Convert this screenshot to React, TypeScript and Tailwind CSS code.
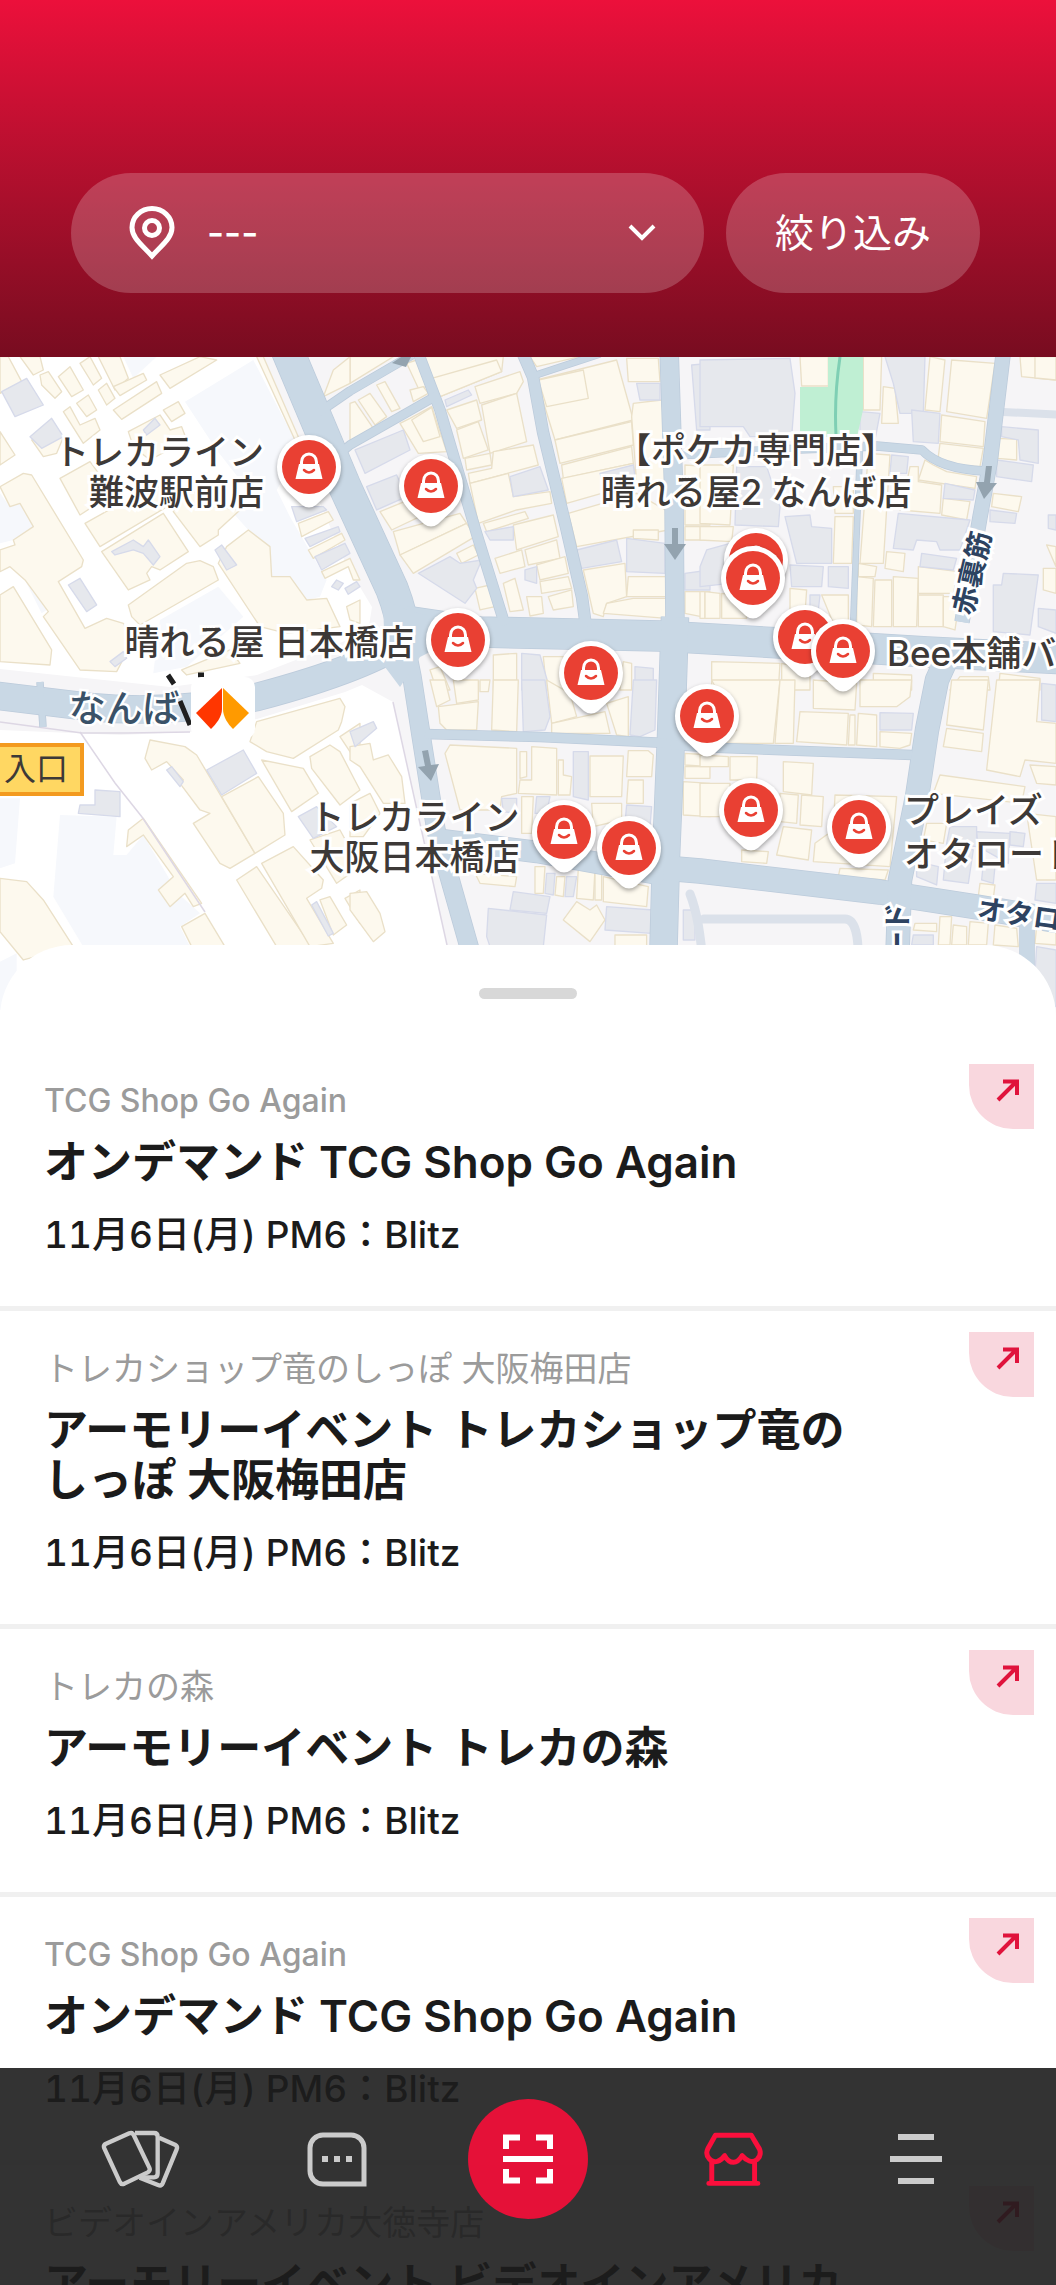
import React from "react";

const MAP_WIDTH = 1056;

type Tile = {
  x: number;
  y: number;
  pale?: string[];
  cream?: string[];
  gray?: string[];
};

/* Building footprints, grouped by map tile. Tile units are a third of a map unit. */
const stationTiles: Tile[] = [
  {
    x: 0,
    y: -7,
    pale: [
      "555,155 760,30 900,300 830,420 870,500 980,690 960,740 920,750 870,680 815,680 810,590 745,540 700,490 760,440 650,300",
      "480,810 655,710 730,800 560,950 460,970",
      "0,430 30,470 60,460 100,530 40,570 0,580",
      "75,690 110,710 140,780 125,790",
      "370,20 470,20 400,85",
    ],
    cream: [
      "0,20 25,20 65,95 0,130",
      "60,20 120,20 130,60 100,75",
      "120,75 145,65 185,125 165,145 125,105",
      "175,80 210,50 250,120 215,140",
      "240,40 270,20 305,85 280,105",
      "295,20 360,20 385,85 345,120",
      "340,110 430,70 440,90 360,137",
      "295,120 320,100 345,145 320,165",
      "230,160 265,135 290,180 260,200",
      "190,185 210,170 240,225 285,205 300,240 250,280",
      "340,180 470,95 485,130 365,208",
      "480,75 600,20 650,30 510,115",
      "490,180 535,155 555,190 515,215",
      "385,245 480,195 510,240 545,230 560,270 450,330 400,290",
      "0,245 45,315 0,345",
      "95,270 190,262 170,310 130,320",
      "180,385 270,335 340,430 240,495",
      "0,410 70,370 95,375 250,630 245,650 175,695 255,835 320,805 370,820 400,870 350,965 240,960 130,800 145,785 75,690 30,650 0,665 0,600 45,585 40,570 100,530 60,460 30,470",
      "255,520 470,400 510,465 300,590",
      "305,605 490,490 565,605 480,660 455,650 440,670 450,690 385,720",
      "520,485 560,410 640,470 720,480 655,540 655,555 600,590",
      "385,765 560,640 600,632 640,650 655,690 420,825 395,800",
      "680,590 745,540 810,590 815,680 870,680 920,750 980,745 1020,830 860,850 780,830 655,640",
      "0,735 40,710 155,900 150,945 0,935",
      "545,960 690,900 720,940 560,975",
      "770,20 790,20 895,260 885,270",
      "895,520 985,485 1000,510 905,560",
      "925,600 1025,550 1035,570 940,625",
      "965,665 1050,625 1080,690 1060,690 1045,650 975,685",
      "1040,770 1080,750 1080,820 1050,810",
    ],
    gray: [
      "5,125 80,85 130,165 45,200",
      "90,260 155,205 190,260 125,295",
      "430,240 465,205 480,225 440,255",
      "645,600 665,585 710,645 680,660",
      "205,705 240,685 290,765 260,785",
      "335,605 400,570 430,590 445,570 480,620 460,645 430,610 400,600 345,615",
      "330,935 370,905 380,925 345,950",
      "875,470 970,470 980,480 890,515",
      "915,565 1015,530 1020,545 930,590",
      "945,620 1035,580 1050,610 965,660",
      "995,710 1010,690 1030,700 1015,720",
      "1035,715 1070,695 1080,710 1045,733",
    ],
  },
  {
    x: 0,
    y: 323,
    pale: [
      "180,405 350,410 340,525 380,525 430,465 510,600 475,630 510,680 545,650 600,700 540,740 570,800 250,800 160,650",
      "0,355 60,355 45,550 0,565",
      "0,845 50,820 50,990 0,990",
    ],
    cream: [
      "450,180 555,200 590,225 765,520 690,565 660,550 580,430 630,400 600,390 540,310 550,300 500,245 455,270 435,235",
      "665,350 775,290 850,400 855,465 765,520",
      "770,125 1020,55 1035,80 1025,125 1015,150 880,235 800,215 750,185",
      "785,240 910,265 955,340 875,395",
      "930,230 990,195 1020,215 1080,330 1020,375 935,265",
      "1020,170 1080,130 1080,260",
      "430,415 605,670 580,680 555,640 510,680 475,630 520,590 430,465 380,500 385,450",
      "545,740 615,700 675,800 575,800",
      "0,595 80,605 130,660 220,800 70,840 0,755",
      "710,600 770,560 935,800 830,800",
      "785,550 880,500 970,600 965,625 920,655 1000,790 930,800",
      "930,480 1020,450 1080,560 1010,610",
      "960,660 990,650 1040,735 1000,765",
      "1035,655 1080,630 1080,730",
    ],
    gray: [
      "620,270 730,210 770,280 665,345",
      "285,330 360,335 360,410 235,400 240,375 285,375",
      "500,270 515,260 550,305 540,320",
      "895,410 950,380 1010,440 940,475",
      "935,675 950,665 1000,760 985,768",
    ],
  },
  {
    x: 350,
    y: 323,
    cream: [
      "0,200 60,190 70,240 115,225 155,290 165,370 100,370 30,260 0,240",
      "0,370 60,340 90,400 40,470 0,470",
      "0,640 50,635 90,700 105,755 70,785 0,690",
    ],
    gray: ["0,155 70,125 80,145 15,200"],
  },
];

const cityTiles: Tile[] = [
  {
    x: 350,
    y: -7,
    cream: [
      "0,20 130,20 0,100",
      "-50,60 0,20 0,100 -80,140",
      "0,160 15,155 70,235 0,275",
      "25,150 60,130 110,200 75,225",
      "80,105 105,95 150,175 125,185",
      "170,40 200,30 230,110 205,115",
      "180,120 220,110 235,130 190,155",
      "150,220 180,205 245,170 265,230 290,305 205,310",
      "185,210 245,172 270,260 220,275",
      "220,20 460,20 455,65 270,140",
      "245,85 440,30 455,65 270,140",
      "375,110 510,65 520,95 500,130 390,160",
      "290,180 380,150 395,210 320,235",
      "320,240 385,215 415,300 340,325",
      "395,165 500,130 530,275 420,310",
      "345,325 420,310 425,345 350,360",
      "430,305 550,285 565,345 360,400 355,370 425,355",
      "360,400 475,370 490,440 600,425 605,460 500,480 385,520",
      "400,520 525,485 535,505 410,545",
      "490,525 610,495 625,560 500,600",
      "435,625 515,600 525,650 450,670",
      "525,600 620,570 630,625 535,645",
      "560,645 645,620 655,670 570,690",
      "570,695 655,680 665,715 575,730",
      "595,740 665,720 670,770 610,780",
      "530,740 575,740 580,790 540,798",
      "460,700 495,685 520,780 480,785",
      "375,715 420,705 435,770 390,780",
      "90,485 200,440 230,490 125,540",
      "130,545 330,490 350,520 150,615",
      "150,615 350,520 375,560 190,670",
      "320,610 370,585 385,615 335,640",
      "560,90 800,30 850,210 615,270",
      "565,90 700,60 715,145 590,170",
      "615,270 845,215 850,285 630,340",
      "635,345 845,290 850,340 640,385",
      "635,385 850,340 860,400 650,460",
      "655,490 860,430 955,485 955,540 680,590",
      "830,25 925,25 930,95 835,95",
      "850,160 935,150 945,260 950,400 860,400 845,200",
      "850,540 925,540 925,570 850,565",
      "700,660 825,640 830,740 770,760 760,800 730,790",
      "835,680 950,680 955,740 830,740",
      "770,760 850,745 955,745 950,805 760,790",
      "540,20 690,20 560,50",
      "1005,345 1080,350 1080,525 1005,525",
      "1005,530 1080,530 1080,570 1005,570",
      "1005,725 1080,725 1080,805 1005,790",
      "240,960 270,950 300,1020 260,1020",
      "430,915 500,910 500,1020 430,1020",
      "580,920 640,920 650,1020 590,1020",
      "820,935 845,940 845,1020 810,1020",
    ],
    gray: [
      "15,300 160,240 180,300 45,370",
      "50,410 140,375 170,440 80,480",
      "205,670 300,620 330,640 395,630 370,690 380,715 345,760",
      "285,150 355,120 365,135 290,170",
      "480,380 570,350 595,420 490,440",
      "405,545 490,530 490,570 420,570",
      "860,100 930,100 930,150 870,150",
      "680,600 800,570 815,635 695,655",
      "830,565 945,580 945,670 830,665",
      "525,660 560,650 560,700 525,690",
      "515,910 570,915 600,1020 515,1020",
      "855,950 910,955 910,1020 855,1020",
      "1025,45 1080,40 1080,240 1040,240",
      "1005,670 1080,660 1080,720 1005,720",
      "750,370 850,345 855,380 760,400",
    ],
  },
  {
    x: 700,
    y: -7,
    cream: [
      "300,20 385,20 385,108 305,108",
      "490,20 545,20 540,180 490,180",
      "550,110 585,115 595,220 545,220",
      "690,20 735,30 720,185 675,180",
      "755,30 885,40 860,205 740,185",
      "725,195 855,215 850,290 720,275",
      "720,280 850,295 840,350 740,345 715,320",
      "895,265 950,268 950,330 893,325",
      "960,20 1068,20 1068,90 965,80",
      "1005,20 1068,20 1068,90 1005,84",
      "675,330 700,345 740,365 830,380 825,415 655,390",
      "630,350 655,350 655,395 725,405 720,490 600,480 620,400",
      "730,445 810,455 800,510 725,495",
      "880,430 965,440 955,485 875,470",
      "505,310 570,315 550,640 480,640",
      "400,410 460,410 460,490 405,490",
      "405,500 460,500 455,640 400,640",
      "0,345 100,345 90,525 0,520",
      "0,530 100,530 95,575 0,570",
      "560,605 615,610 610,665 555,655",
      "475,640 530,650 525,680 475,680",
      "470,680 520,685 515,830 470,825",
      "525,690 575,690 575,830 520,830",
      "580,680 655,685 650,830 580,830",
      "655,650 775,665 760,730 655,730",
      "655,735 730,735 730,830 655,830",
      "730,740 780,740 765,840 730,830",
      "270,715 320,720 315,790 270,780",
      "365,735 445,735 445,825 400,820",
      "0,725 15,725 15,805 0,805",
      "15,725 60,730 60,805 15,805",
      "65,730 130,740 140,805 65,805",
      "1040,585 1068,590 1068,650",
      "1030,655 1068,655 1068,730 1030,720",
      "35,935 240,940 235,1020 35,1020",
      "245,940 330,960 330,1020 245,1020",
      "520,970 635,975 635,1020 520,1020",
      "780,980 865,980 870,1020 750,1020",
      "900,970 1020,985 1020,1020 895,1020",
    ],
    gray: [
      "0,30 270,25 285,130 275,260 150,260 130,230 0,230",
      "480,185 540,190 525,270 480,250",
      "555,20 675,20 670,190 600,190 580,100",
      "635,180 720,190 715,280 640,275",
      "575,315 625,320 620,370 570,370",
      "735,400 825,420 820,450 730,445",
      "595,490 810,510 780,600 720,600 710,575 650,570 640,600 580,595",
      "665,610 770,625 760,660 660,650",
      "255,500 330,495 335,530 395,535 395,640 290,640",
      "270,645 370,650 365,710 275,710",
      "385,650 445,650 445,715 385,710",
      "110,350 200,350 240,470 235,530 105,525",
      "905,230 1015,240 1015,340 960,330 955,270 905,260",
      "890,330 1000,345 995,395 890,380",
      "870,480 950,490 945,520 870,515",
      "910,670 1015,675 990,855 880,845 880,705 905,705",
      "1015,775 1068,780 1068,850 1015,830",
      "1045,495 1068,495 1068,540 1045,535",
      "20,600 90,580 90,700 0,710 0,650",
      "330,735 360,735 355,780 330,780",
    ],
  },
  {
    x: 350,
    y: 323,
    cream: [
      "240,0 285,0 300,60 260,80",
      "310,0 385,0 385,60 320,70",
      "265,80 385,65 380,150 290,150 270,130",
      "390,0 420,0 415,35 390,35",
      "430,0 505,0 500,155 425,150",
      "590,0 660,40 680,110 605,130",
      "605,130 765,95 780,160 605,160",
      "770,70 835,50 835,170 800,165",
      "300,195 500,205 500,340 455,350 450,390 330,390 285,220",
      "545,200 620,205 620,345 505,340 510,300 545,300",
      "510,215 530,215 530,290 510,295",
      "625,240 640,240 640,285 665,290 660,345 625,345",
      "720,228 820,228 815,350 720,350",
      "835,212 895,212 910,225 905,290 830,290",
      "835,300 880,300 880,370 830,370",
      "725,370 815,370 815,420 730,440",
      "515,350 550,350 545,460 515,460",
      "375,580 500,590 495,620 390,610",
      "555,560 585,560 580,640 555,640",
      "620,590 645,590 640,650 615,645",
      "685,565 735,570 730,660 680,655",
      "735,575 755,575 755,660 735,660",
      "760,590 895,620 890,680 760,665",
      "680,665 720,690 740,675 765,720 720,785 640,720",
      "795,765 890,765 890,800 795,800",
      "1005,220 1080,225 1080,260 1005,255",
      "1005,260 1080,260 1080,295 1005,295",
      "1000,305 1080,310 1080,410 1000,405",
    ],
    gray: [
      "515,0 585,0 600,110 585,150 520,155",
      "850,0 920,0 915,150 870,170 840,165",
      "670,215 715,215 715,360 670,350",
      "455,355 500,355 500,400 460,395",
      "830,375 905,380 900,440 825,430",
      "490,635 600,650 590,700 480,690",
      "415,685 590,705 580,800 420,800 410,770",
      "770,680 910,690 905,760 765,750",
      "590,580 615,580 610,645 585,640",
      "650,590 680,590 670,650 645,650",
      "1000,690 1035,690 1035,780 1000,780",
      "560,350 600,350 590,400 555,400",
    ],
  },
  {
    x: 700,
    y: 323,
    cream: [
      "35,0 240,0 220,190 50,190 110,150",
      "240,0 285,0 280,190 225,190",
      "300,95 445,100 440,195 290,185",
      "450,105 465,105 465,195 445,195",
      "475,100 530,105 530,200 470,195",
      "540,155 635,160 630,195 600,205 540,200",
      "340,0 470,10 465,90 340,85",
      "480,0 635,0 630,50 590,80 480,80",
      "755,0 865,0 850,150 740,135",
      "740,145 850,160 845,215 730,200",
      "890,0 1020,0 1010,125 1068,130 1068,250 975,240 960,290 860,270",
      "990,255 1068,260 1068,315 1010,310",
      "720,285 975,320 965,370 700,340",
      "680,430 740,430 730,490 670,480",
      "250,245 340,250 335,345 250,335",
      "90,230 172,230 170,300 90,300",
      "0,225 85,230 85,260 0,260",
      "0,310 90,310 90,410 0,410",
      "240,340 295,345 290,430 240,425",
      "305,345 370,350 365,440 300,435",
      "250,440 335,450 325,540 230,525",
      "405,345 590,350 570,560 340,545 345,490 400,450",
      "420,565 565,570 555,600 415,590",
      "125,510 205,515 200,550 125,545",
      "980,400 1068,410 1068,600 1010,600",
      "840,610 885,615 880,655 835,650",
      "720,710 755,710 750,795 715,795",
      "645,730 710,730 710,755 640,750",
      "760,735 800,740 800,795 755,795",
      "810,725 865,730 860,795 805,795",
      "885,735 950,745 955,800 880,795",
      "1010,740 1068,740 1068,795 1005,790",
    ],
    gray: [
      "540,98 640,100 635,150 540,150",
      "750,440 830,440 830,500 740,490",
      "740,490 820,510 805,610 730,600",
      "650,545 715,560 710,615 650,590",
      "850,550 885,560 880,610 845,600",
      "930,455 975,460 970,500 930,495",
      "1010,610 1068,610 1068,670 1005,660",
      "640,765 700,765 700,795 635,795",
      "1010,800 1068,810 1068,980 1000,960",
      "1025,10 1068,15 1068,125 1025,120",
      "830,455 930,460 925,550 835,500",
    ],
  },
];

function Buildings({ tiles }: { tiles: Tile[] }) {
  return (
    <>
      {tiles.map((t, i) => (
        <g key={i} transform={`translate(${t.x} ${t.y}) scale(0.3333)`} strokeWidth={4} strokeLinejoin="round">
          {t.pale?.map((p) => (
            <polygon key={p} points={p} fill="#f6f8fc" />
          ))}
          {t.cream?.map((p) => (
            <polygon key={p} points={p} fill="#fdf9ee" stroke="#eae0c8" />
          ))}
          {t.gray?.map((p) => (
            <polygon key={p} points={p} fill="#e6e8ed" stroke="#d6daea" />
          ))}
        </g>
      ))}
    </>
  );
}

const roads: { d: string; w: number }[] = [
  { d: "M286 -10 L345 130 L392 232 Q402 258 404 280", w: 32 },
  { d: "M392 262 L480 275 L660 279 L780 286 L927 295 L1066 302", w: 30 },
  { d: "M410 280 Q370 310 257 340 Q170 358 90 350 L-10 338", w: 27 },
  { d: "M402 270 L412 320 L421 378 L436 473 L472 600", w: 18 },
  { d: "M416 -10 L440 53 L477 178 L505 268", w: 10 },
  { d: "M520 -10 L533 20 L543 75 L566 170 L582 240 L586 270", w: 11 },
  { d: "M533 19 L600 -3", w: 6 },
  { d: "M318 56 L350 34 L412 -2", w: 8 },
  { d: "M338 98 L350 88 L436 39", w: 8 },
  { d: "M669 -10 L674 143 L675 270", w: 18 },
  { d: "M675 260 L671 380 L666 500 L663 610", w: 27 },
  { d: "M425 377 L540 380 L666 386", w: 9 },
  { d: "M671 388 L723 391 L912 398", w: 9 },
  { d: "M433 482 L537 495 L664 518", w: 21 },
  { d: "M664 511 L700 514 L880 535 L977 550 L1066 565", w: 24 },
  { d: "M1004 -10 L990 106 L980 160 L962 265", w: 14 },
  { d: "M952 290 L937 323 L927 373 L917 440 L900 523 L897 610", w: 23 },
  { d: "M675 98 L800 92 L877 89 L922 93 Q940 112 985 114", w: 8 },
  { d: "M860 92 L853 270", w: 5 },
  { d: "M40 325 L43 370", w: 6 },
  { d: "M1027 560 L1027 610", w: 14 },
];

function MapDrawing() {
  return (
    <svg
      aria-hidden="true"
      className="absolute inset-0 h-full w-full"
      viewBox="0 0 1056 660"
      preserveAspectRatio="xMidYMid slice"
    >
      <rect width="1056" height="660" fill="#f6f5f7" />
      <polygon points="0,0 258,0 345,205 372,250 368,275 257,318 170,330 0,312" fill="#ffffff" />
      <polygon points="0,373 120,378 190,375 257,362 345,335 362,328 393,345 447,588 447,660 0,660" fill="#ffffff" />
      <Buildings tiles={stationTiles} />
      <path d="M80 375 L115 426 L142 460 L205 555" fill="none" stroke="#ddd7e4" strokeWidth="1.5" />
      <path d="M0 365 L82 376 L128 376 L190 375" fill="none" stroke="#ddd7e4" strokeWidth="1.5" />
      <path d="M393 345 L447 588" fill="none" stroke="#ddd7e4" strokeWidth="1.5" />
      <Buildings tiles={cityTiles} />
      <polygon points="828,0 863,0 863,53 857,80 800,80 800,30 828,30" fill="#bfefd3" />
      <path d="M840 0 Q834 40 836 78" fill="none" stroke="#7fcfb4" strokeWidth="3" />
      <g fill="none" stroke="#dbe1ea" strokeLinecap="round">
        <path d="M1003 55 L1066 58" strokeWidth="8" />
        <path d="M690 537 Q700 562 703 610 M704 562 L845 562 Q860 562 858 610" strokeWidth="9" />
      </g>
      <g fill="none" stroke="#bccbdb" strokeLinejoin="round">
        {roads.map((r) => (
          <path key={r.d} d={r.d} strokeWidth={r.w + 1.5} />
        ))}
      </g>
      <g fill="none" stroke="#c9d8e5" strokeLinejoin="round">
        {roads.map((r) => (
          <path key={r.d} d={r.d} strokeWidth={r.w} />
        ))}
      </g>
      <path d="M383 240 Q400 255 440 260 L440 290 L420 300 L400 330 L385 310 Z" fill="#c9d8e5" />
      <g fill="#93a3af">
        <path d="M672 171h6v16h8l-11 16l-11 -16h8z" />
        <path d="M986 109h6l-2 17h7l-13 16l-8 -17h8z" />
        <path d="M422 394l6 -1l3 15l8 -1l-8 17l-13 -14l7 -1z" />
        <path d="M392 6l12 -8h8l-6 12z" />
      </g>
      <path d="M168 318l6 9M180 344l10 24M198 318h6" stroke="#1f1f1f" strokeWidth="5" fill="none" />
    </svg>
  );
}

const pins: { x: number; y: number; shop: string }[] = [
  { x: 309, y: 110, shop: "トレカライン 難波駅前店" },
  { x: 431, y: 129, shop: "ショップ 1" },
  { x: 458, y: 283, shop: "晴れる屋 日本橋店" },
  { x: 591, y: 316, shop: "ショップ 2" },
  { x: 756, y: 203, shop: "ショップ 3" },
  { x: 753, y: 221, shop: "晴れる屋2 なんば店" },
  { x: 805, y: 280, shop: "ショップ 4" },
  { x: 843, y: 294, shop: "Bee本舗" },
  { x: 707, y: 359, shop: "ショップ 5" },
  { x: 751, y: 453, shop: "ショップ 6" },
  { x: 859, y: 470, shop: "プレイズ オタロード" },
  { x: 564, y: 475, shop: "トレカライン 大阪日本橋店" },
  { x: 629, y: 491, shop: "ショップ 7" },
];

function ShopPin({ x, y, shop }: { x: number; y: number; shop: string }) {
  return (
    <button
      type="button"
      aria-label={shop}
      className="absolute h-[80px] w-[72px] -translate-x-1/2"
      style={{ left: `${(x / MAP_WIDTH) * 100}%`, top: y - 36 }}
    >
      <svg viewBox="-36 -36 72 80" className="h-full w-full drop-shadow-[0_2px_2px_rgba(0,0,0,0.35)]" aria-hidden="true">
        <path d="M0 -32A32 32 0 0 1 32 0C32 10 28 17 22 24L7 38Q0 43 -7 38L-22 24C-28 17 -32 10 -32 0A32 32 0 0 1 0 -32Z" fill="#fff" />
        <circle r="27" fill="#e94033" />
        <path d="M-10 -3H10L13.500 12H-13.500Z" fill="#fff" />
        <path d="M-7.500 -2V-5A7.500 8 0 0 1 7.500 -5V-2" fill="none" stroke="#fff" strokeWidth="3" />
        <path d="M-5 3Q0 8 5 3" fill="none" stroke="#e94033" strokeWidth="2.500" strokeLinecap="round" />
      </svg>
    </button>
  );
}

const halo = "[-webkit-text-stroke:6px_#ffffff] [paint-order:stroke_fill]";
const shopLabel = `absolute whitespace-pre text-[35px] font-medium text-[#3d3937] ${halo}`;
const streetLabel = `absolute whitespace-nowrap text-[28px] leading-[32px] font-bold text-[#2d4361] ${halo}`;

function ShopMap() {
  return (
    <section aria-label="地図" className="relative h-[660px] shrink-0 overflow-hidden">
      <MapDrawing />

      <span className={`${streetLabel} top-[200px] left-[92%] -translate-x-1/2 -rotate-[77deg]`}>赤裏筋</span>
      <span className={`${streetLabel} top-[545px] left-[92.5%] rotate-[8deg]`}>オタロード</span>
      <span className={`${streetLabel} top-[600px] left-[85%] -translate-x-1/2 -rotate-90`}>オタロード</span>

      <span className="absolute top-[331px] left-[6.5%] text-[37px] leading-[42px] font-medium text-[#3a5268] [-webkit-text-stroke:5px_#ffffff] [paint-order:stroke_fill]">
        なんば
      </span>
      <svg aria-hidden="true" viewBox="0 0 64 62" className="absolute top-[320px] left-[18.1%] h-[62px] w-[64px]">
        <rect width="64" height="62" rx="10" fill="#fff" />
        <path d="M31 11L5 36L20 52C25 47 31 40 31 32Z" fill="#ff3600" />
        <path d="M32 11L58 36L42 52C37 47 32 40 32 32Z" fill="#ff9a00" />
      </svg>
      <span className="absolute top-[386px] left-0 h-[53px] w-[84px] border-4 border-l-0 border-[#f39a1f] bg-[#ffd762] pl-1 text-[32px] leading-[44px] text-[#3d3937]">
        入口
      </span>

      <p className={`${shopLabel} top-[75px] right-[75%] text-right leading-[40px]`}>{"トレカライン\n難波駅前店"}</p>
      <p className={`${shopLabel} top-[265px] right-[60.8%] leading-[40px]`}>晴れる屋 日本橋店</p>
      <p className={`${shopLabel} top-[72px] left-[71.6%] -translate-x-1/2 text-center leading-[42px]`}>
        {"【ポケカ専門店】\n晴れる屋2 なんば店"}
      </p>
      <p className={`${shopLabel} top-[440px] right-[50.8%] text-right leading-[40px]`}>{"トレカライン\n大阪日本橋店"}</p>
      <p className={`${shopLabel} top-[276px] left-[84%] leading-[40px]`}>Bee本舗バ</p>
      <p className={`${shopLabel} top-[431px] left-[85.6%] leading-[44px]`}>{"プレイズ\nオタロード"}</p>

      {pins.map((p) => (
        <ShopPin key={`${p.x}-${p.y}`} {...p} />
      ))}
    </section>
  );
}

type ShopEvent = { shop: string; latinName?: boolean; title: string; date: string };

const events: ShopEvent[] = [
  { shop: "TCG Shop Go Again", latinName: true, title: "オンデマンド TCG Shop Go Again", date: "11月6日(月) PM6：Blitz" },
  {
    shop: "トレカショップ竜のしっぽ 大阪梅田店",
    title: "アーモリーイベント トレカショップ竜のしっぽ 大阪梅田店",
    date: "11月6日(月) PM6：Blitz",
  },
  { shop: "トレカの森", title: "アーモリーイベント トレカの森", date: "11月6日(月) PM6：Blitz" },
  { shop: "TCG Shop Go Again", latinName: true, title: "オンデマンド TCG Shop Go Again", date: "11月6日(月) PM6：Blitz" },
  {
    shop: "ビデオインアメリカ大徳寺店",
    title: "アーモリーイベント ビデオインアメリカ大徳寺店",
    date: "11月6日(月) PM6：Blitz",
  },
];

function EventItem({ shop, latinName, title, date }: ShopEvent) {
  return (
    <li className="relative border-b-[5px] border-[#f0f0f0] pt-[34px] pr-[180px] pb-[47px] pl-11">
      <p className={`${latinName ? "text-[32px] font-medium" : "text-[34px]"} leading-[48px] text-[#9b9b9b]`}>{shop}</p>
      <h2 className="mt-3 text-[44px] leading-[50px] font-semibold text-[#1b1b1b]">{title}</h2>
      <p className="mt-6 text-[37px] leading-[48px] font-medium text-[#1b1b1b] tabular-nums">{date}</p>
      <a
        href="#event"
        aria-label={`${title} を開く`}
        className="absolute top-[21px] right-[22px] flex h-[65px] w-[65px] items-start justify-end rounded-bl-[44px] bg-[#f9d7de] pt-[14px] pr-[14px]"
      >
        <svg viewBox="0 0 24 24" className="h-6 w-6" fill="none" stroke="#e0133c" strokeWidth="4" aria-hidden="true">
          <path d="M2 22L20 4M7 3.500H21V17" />
        </svg>
      </a>
    </li>
  );
}

function NavBar() {
  return (
    <nav className="fixed inset-x-0 bottom-0 flex items-start bg-[#1d1d1d]/90 pt-[31px] pb-[66px]">
      <div className="flex h-[120px] flex-1 items-center justify-center gap-[126px]">
        <button type="button" aria-label="カード">
          <svg viewBox="296 230 240 186" className="h-[62px] w-[80px]" fill="none" stroke="#cbcbcb" strokeWidth="13" strokeLinejoin="round" aria-hidden="true">
            <path d="M311 277L381 246Q390 242 394 251L441 349Q445 358 436 363L366 397Q357 401 353 393L306 291Q302 281 311 277Z" />
            <path d="M398 245H455Q466 245 466 256V366Q466 378 455 378H412" />
            <path d="M470 259L518 280Q527 285 523 294L481 396Q477 405 467 401L412 379" />
          </svg>
        </button>
        <button type="button" aria-label="メッセージ">
          <svg viewBox="0 0 60 55" className="h-[55px] w-[60px]" fill="none" stroke="#cbcbcb" strokeWidth="5" aria-hidden="true">
            <path d="M16 3H44A13 13 0 0 1 57 16V52H16A13 13 0 0 1 3 39V16A13 13 0 0 1 16 3Z" />
            <path d="M15 27h6M27 27h6M39 27h6" strokeWidth="6" />
          </svg>
        </button>
      </div>
      <button type="button" aria-label="スキャン" className="flex h-[120px] w-[120px] items-center justify-center rounded-full bg-[#e51138]">
        <svg viewBox="0 0 50 50" className="h-[50px] w-[50px]" fill="none" stroke="#fff" strokeWidth="6" aria-hidden="true">
          <path d="M3 15V3.500H17M33 3.500H47V15M3 35V46.500H17M33 46.500H47V35M0 25H50" />
        </svg>
      </button>
      <div className="flex h-[120px] flex-1 items-center justify-center gap-[126px]">
        <button type="button" aria-label="ショップ" aria-current="page">
          <svg viewBox="513 238 182 170" className="h-[56px] w-[61px]" fill="none" stroke="#fb0f3c" strokeWidth="15" strokeLinejoin="round" strokeLinecap="round" aria-hidden="true">
            <path d="M549 251H658L683 293Q690 312 675 325Q664 334 652 329Q640 325 630 313Q618 333 604 333Q588 333 577 313Q567 327 555 330Q540 334 530 322Q518 308 526 292Z" />
            <path d="M538 334V396M668 334V396M529 397H678" />
          </svg>
        </button>
        <button type="button" aria-label="メニュー">
          <svg viewBox="0 0 52 50" className="h-[50px] w-[52px]" fill="none" stroke="#cbcbcb" strokeWidth="6" aria-hidden="true">
            <path d="M8 3H44M0 25H52M8 47H44" />
          </svg>
        </button>
      </div>
    </nav>
  );
}

export default function App() {
  return (
    <div className="flex h-screen flex-col overflow-hidden bg-white font-[Inter,'Noto_Sans_CJK_JP',sans-serif]">
      <header className="flex shrink-0 gap-[22px] bg-linear-to-b from-[#ec103b] to-[#780c20] pt-[173px] pr-[76px] pb-16 pl-[71px] text-white">
        <label className="relative flex h-[120px] flex-1 items-center rounded-full bg-white/20 pl-[58px]">
          <svg viewBox="0 0 46 54" className="h-[54px] w-[46px] shrink-0" fill="none" stroke="currentColor" strokeWidth="5" aria-hidden="true">
            <path d="M23 50C13 39 3 32 3 21.500A20 19 0 0 1 43 21.500C43 32 33 39 23 50Z" />
            <circle cx="23" cy="22" r="7.500" />
          </svg>
          <select aria-label="エリア" className="h-full w-full appearance-none bg-transparent pl-8 text-[37px] leading-[48px] font-medium outline-none">
            <option>---</option>
          </select>
          <svg viewBox="0 0 28 18" className="pointer-events-none absolute right-12 h-[18px] w-[28px]" fill="none" stroke="currentColor" strokeWidth="4" aria-hidden="true">
            <path d="M2 2L14 14L26 2" />
          </svg>
        </label>
        <button type="button" className="h-[120px] w-[254px] rounded-full bg-white/20 text-[39px] leading-[48px]">
          絞り込み
        </button>
      </header>

      <ShopMap />

      <main className="relative -mt-[72px] flex min-h-0 flex-1 flex-col rounded-t-[72px] bg-white pt-[43px]">
        <div className="mx-auto mb-11 h-[11px] w-[98px] shrink-0 rounded-full bg-[#d8d8d8]" />
        <ul className="min-h-0 flex-1 overflow-y-auto pb-[217px] [scrollbar-width:none]">
          {events.map((e, i) => (
            <EventItem key={i} {...e} />
          ))}
        </ul>
      </main>

      <NavBar />
    </div>
  );
}
